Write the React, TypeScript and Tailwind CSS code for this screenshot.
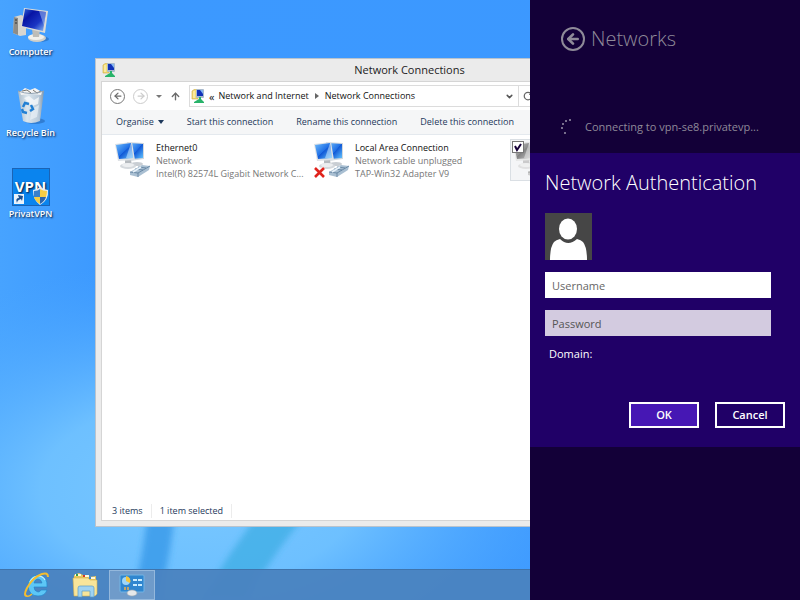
import { useState } from 'react';
import { ArrowLeft, ArrowRight, ArrowUp, ChevronDown, RotateCw } from 'lucide-react';

interface Connection {
  name: string;
  status: string;
  device: string;
  unplugged: boolean;
}

const connections: Connection[] = [
  { name: 'Ethernet0', status: 'Network', device: 'Intel(R) 82574L Gigabit Network C...', unplugged: false },
  { name: 'Local Area Connection', status: 'Network cable unplugged', device: 'TAP-Win32 Adapter V9', unplugged: true },
];

function ComputerIcon() {
  return (
    <svg width="38" height="36" viewBox="0 0 38 36" aria-hidden="true">
      <defs>
        <linearGradient id="pc-screen" x1="0" y1="0" x2="1" y2="1">
          <stop offset="0" stopColor="#2f6ae0" />
          <stop offset="0.3" stopColor="#0714a4" />
          <stop offset="0.65" stopColor="#1a35c4" />
          <stop offset="1" stopColor="#8fc4f8" />
        </linearGradient>
      </defs>
      <ellipse cx="28" cy="32" rx="9" ry="3" fill="#1d5ca8" opacity="0.5" />
      <path d="M2 10 L9 8 L14 10 V28 L8 29 L1 26 Z" fill="#d8d6d0" />
      <path d="M2 10 L6 11 V28 L1 26 Z" fill="#8d8c88" />
      <path d="M3 13 h2 M3 16 h2" stroke="#333" />
      <ellipse cx="25" cy="31" rx="9" ry="4" fill="#cfcfca" />
      <ellipse cx="24" cy="30" rx="8" ry="3" fill="#f1f1ec" />
      <path d="M20 22 L28 23 L27 30 H21 Z" fill="#bdbdb8" />
      <path d="M12 1 L36 4 L33 26 L9 20 Z" fill="#dcdcd8" />
      <path d="M13 2 L34 5 L31 24 L10 19 Z" fill="url(#pc-screen)" />
      <path d="M27 4 L34 5 L32 19 Z" fill="#a8c8f5" opacity="0.5" />
    </svg>
  );
}

function RecycleBinIcon() {
  return (
    <svg width="32" height="38" viewBox="0 0 32 38" aria-hidden="true">
      <defs>
        <linearGradient id="bin-glass" x1="0" y1="0" x2="1" y2="0">
          <stop offset="0" stopColor="#a9bac8" />
          <stop offset="0.35" stopColor="#dbe6ee" />
          <stop offset="0.8" stopColor="#b9cad9" />
          <stop offset="1" stopColor="#7f97ad" />
        </linearGradient>
      </defs>
      <ellipse cx="20" cy="34" rx="10" ry="3" fill="#1d5ca8" opacity="0.5" />
      <path d="M3 4 L29 4 L25 34 Q16 38 8 34 Z" fill="url(#bin-glass)" />
      <path d="M5 5 L10 1 L15 3 L20 1 L27 5 L26 8 L17 7 L6 8 Z" fill="#f3f3f3" />
      <path d="M7 4 L12 3 L16 6 M18 3 L22 6 L26 4" stroke="#77756f" fill="none" />
      <path d="M9 11 L14 9 L19 13 L24 10 L23 17 L17 19 Z" fill="#f6f9fb" opacity="0.8" />
      <path d="M17 22 L24 18 L22 30 L15 33 Z" fill="#eaf1f6" opacity="0.7" />
      <path d="M3 4 Q16 9 29 4" fill="none" stroke="#90a3b4" />
      <path d="M8 20 L10 16 L14 17 M16 18 L18 22 L15 24 M12 26 L8 25 L7 22" fill="none" stroke="#2380d3" strokeWidth="2.5" />
    </svg>
  );
}

function VpnIcon() {
  return (
    <div className="relative flex h-[38px] w-[38px] items-center justify-center border border-[#1b63b5] bg-[#0a84ee]">
      <span className="text-[15px] font-bold leading-none text-white">VPN</span>
      <svg className="absolute inset-0" width="36" height="36" viewBox="0 0 36 36" aria-hidden="true">
        <rect x="1" y="25" width="10" height="10" fill="#e9f2fb" />
        <path d="M4 34 Q2 29 6 29 L5 26 L10 27 L9 32 L8 30 Q4 31 4 34 Z" fill="#1b4f8f" />
        <path d="M27 18 Q31 21 35 21 Q36 31 27 36 Q20 31 20 21 Q24 21 27 18 Z" fill="#e8edf2" />
        <path d="M27 20 V28 H21 Q21 25 21 22 Q25 22 27 20 Z" fill="#3a80cc" />
        <path d="M27 20 Q30 22 34 22 Q34 25 33 28 H27 Z" fill="#f5cd45" />
        <path d="M21 28 H27 V35 Q22 32 21 28 Z" fill="#f5cd45" />
        <path d="M27 28 H33 Q32 32 27 35 Z" fill="#2a64ad" />
      </svg>
    </div>
  );
}

function NetworkFolderIcon() {
  return (
    <svg width="14" height="14" viewBox="0 0 14 14" aria-hidden="true" className="shrink-0">
      <path d="M1 2 L4 0 L7 1 V10 H1 Z" fill="#f3dc76" stroke="#c9a93c" strokeWidth="0.6" />
      <path d="M3 2 V9" stroke="#fff7c8" />
      <rect x="5" y="0" width="8" height="9" rx="1" fill="#a9bacd" />
      <rect x="6" y="1" width="6" height="6" fill="#1232b8" />
      <path d="M9 1 h3 v4 Z" fill="#88b9f2" />
      <path d="M8 8 h2 v2 l3 3 v1 H3 v-1 l5 -3 Z" fill="#28b36a" />
    </svg>
  );
}

function AdapterIcon({ unplugged, dimmed = false }: { unplugged: boolean; dimmed?: boolean }) {
  return (
    <svg
      width="38"
      height="38"
      viewBox="0 0 38 38"
      aria-hidden="true"
      className={dimmed ? 'shrink-0 opacity-70 grayscale' : 'shrink-0'}
    >
      <defs>
        <linearGradient id="adapter-screen" x1="0" y1="0" x2="1" y2="1">
          <stop offset="0" stopColor="#6fbcfb" />
          <stop offset="0.5" stopColor="#1f6fe6" />
          <stop offset="0.52" stopColor="#1158d6" />
          <stop offset="1" stopColor="#65c6ff" />
        </linearGradient>
      </defs>
      <ellipse cx="23" cy="23" rx="6" ry="2" fill="#c9ced3" />
      <path d="M13 1 L30 2 V18 L16 20 Z" fill="#d3d8dd" />
      <path d="M15 2 L29 3 V17 L17 18 Z" fill="url(#adapter-screen)" />
      <path d="M11 19 L17 19 L18 24 H11 Z" fill="#b5babf" />
      <ellipse cx="14" cy="25" rx="8" ry="3" fill="#d5d9dd" />
      <ellipse cx="14" cy="24" rx="6" ry="2" fill="#eceef0" />
      <path d="M1 3 L18 1 L21 19 L4 20 Z" fill="#dde1e5" />
      <path d="M2 4 L17 2 L19 17 L5 18 Z" fill="url(#adapter-screen)" />
      <path d="M17 2 L19 17 L12 17 Z" fill="#d9efff" opacity="0.5" />
      <path d="M16 31 L28 24 L36 25 L35 29 L24 36 L16 34 Z" fill="#a9bfd2" />
      <path d="M16 31 L24 32 L36 25 M24 32 V36 M21 28 L29 29 M24 26 L32 27" stroke="#5b7c9b" fill="none" strokeWidth="0.8" />
      <path d="M19 31 L27 26" stroke="#e8f2fa" strokeWidth="1.5" />
      {unplugged && (
        <g>
          <path d="M2 27 L11 36 M11 27 L2 36" stroke="#fff" strokeWidth="4" />
          <path d="M2 27 L11 36 M11 27 L2 36" stroke="#e0231c" strokeWidth="2.6" />
        </g>
      )}
    </svg>
  );
}

function ExplorerBrowserIcon() {
  return (
    <svg width="28" height="28" viewBox="0 0 28 28" aria-hidden="true">
      <path
        d="M11 16 H24 Q25 5 15 4 Q5 5 5 15 Q6 25 15 25 Q22 25 24 19 H18 Q17 21 15 21 Q11 20 11 16 Z M11 12 Q12 8 15 8 Q18 8 19 12 Z"
        fill="#5cc6f6"
        fillRule="evenodd"
        stroke="#2486cc"
        strokeWidth="0.7"
      />
      <path d="M7 11 Q9 6 15 5 Q20 5 22 9" fill="none" stroke="#c9f0ff" strokeWidth="1.2" />
      <path d="M4 25 Q0 25 4 17 Q10 6 19 3 Q25 1 25 6" fill="none" stroke="#f4bd2f" strokeWidth="2" />
      <path d="M4 25 Q6 26 9 23" fill="none" stroke="#f4bd2f" strokeWidth="1.4" />
    </svg>
  );
}

function FolderIcon() {
  return (
    <svg width="28" height="26" viewBox="0 0 28 26" aria-hidden="true">
      <path d="M3 3 L8 1 L12 3 L17 3 L18 5 L25 4 V12 H3 Z" fill="#e8c65c" />
      <path d="M4 3 h6 M13 4 h5 M19 6 h5" stroke="#fff8dc" strokeWidth="2" />
      <path d="M5 3 h2" stroke="#35a04a" strokeWidth="2" />
      <path d="M12 4 h2" stroke="#d53a2c" strokeWidth="2" />
      <path d="M18 6 h2" stroke="#3a87d3" strokeWidth="2" />
      <path d="M2 6 H17 L19 8 H26 V22 L24 24 H3 Z" fill="#f8e59a" stroke="#d9b44b" strokeWidth="0.6" />
      <path d="M7 25 V16 Q7 14 9 14 H21 Q23 14 23 16 V25 H19 V19 H11 V25 Z" fill="#9fd3f2" stroke="#5a9cc8" strokeWidth="0.7" />
    </svg>
  );
}

function ControlPanelIcon() {
  return (
    <svg width="28" height="24" viewBox="0 0 28 24" aria-hidden="true">
      <rect x="2" y="2" width="24" height="17" rx="1" fill="#2f86cf" stroke="#74b4e4" />
      <circle cx="8" cy="8" r="4" fill="#9ed6f8" />
      <path d="M8 8 V3 A5 5 0 0 1 12 10 Z" fill="#f7c63a" />
      <path d="M15 7 h4 M20 7 h4 M15 12 h4 M20 12 h4" stroke="#c9ecff" strokeWidth="2" />
      <path d="M7 17 v-3 M10 17 v-3" stroke="#f0b04a" strokeWidth="1.5" />
      <ellipse cx="14" cy="20" rx="5" ry="3" fill="#e6e8ea" stroke="#a3a9af" strokeWidth="0.6" />
    </svg>
  );
}

function BusyDots() {
  return (
    <svg width="16" height="16" viewBox="0 0 16 16" aria-hidden="true" fill="#9a93a8" className="shrink-0">
      <circle cx="9" cy="1" r="1" />
      <circle cx="5" cy="2" r="1" />
      <circle cx="2" cy="5" r="1" />
      <circle cx="1" cy="9" r="1" />
      <circle cx="4" cy="14" r="1" />
    </svg>
  );
}

const shortcuts = [
  { label: 'Computer', icon: <ComputerIcon /> },
  { label: 'Recycle Bin', icon: <RecycleBinIcon /> },
  { label: 'PrivatVPN', icon: <VpnIcon /> },
];

function Wallpaper() {
  return (
    <svg className="absolute inset-0 h-full w-full" viewBox="0 0 800 600" preserveAspectRatio="none" aria-hidden="true">
      <defs>
        <linearGradient id="sky" x1="0" y1="0" x2="1" y2="0">
          <stop offset="0" stopColor="#47a3ff" />
          <stop offset="0.13" stopColor="#3c99ff" />
          <stop offset="1" stopColor="#3c98ff" />
        </linearGradient>
        <radialGradient id="glow">
          <stop offset="0" stopColor="#79c8ff" />
          <stop offset="0.4" stopColor="#70c2ff" stopOpacity="0.95" />
          <stop offset="1" stopColor="#4aa6ff" stopOpacity="0" />
        </radialGradient>
        <filter id="soft" x="-20%" y="-20%" width="140%" height="140%">
          <feGaussianBlur stdDeviation="3" />
        </filter>
      </defs>
      <rect width="800" height="600" fill="url(#sky)" />
      <ellipse cx="200" cy="490" rx="400" ry="230" fill="url(#glow)" />
      <g filter="url(#soft)">
        <path d="M151 480 L178 480 Q174 540 160 600 L132 600 Q145 550 151 480 Z" fill="#2f93e6" opacity="0.7" />
        <path d="M286 480 L335 480 Q285 535 246 600 L202 600 Q235 540 286 480 Z" fill="#35aae0" opacity="0.65" />
      </g>
    </svg>
  );
}

function NetworkWindow() {
  const [selected, setSelected] = useState(true);

  return (
    <section
      aria-label="Network Connections"
      className="mr-[82px] mt-[58px] mb-[42px] flex min-w-0 flex-1 flex-col border border-[#b9c3cd] bg-[#ebebeb] px-[5px] pb-[5px] text-[9px] text-[#1e395b]"
    >
      <header className="flex h-[22px] shrink-0 items-center px-px">
        <NetworkFolderIcon />
        <h1 className="flex-1 pr-2 text-center text-[11px] text-[#222]">Network Connections</h1>
      </header>

      <div className="flex flex-1 flex-col border border-[#d5d5d5] bg-white">
        {/* Navigation */}
        <nav className="flex h-7 shrink-0 items-center gap-2 px-2 text-[#6b6b6b]">
          <button aria-label="Back" className="flex size-[15px] items-center justify-center rounded-full border border-[#777]">
            <ArrowLeft size={10} strokeWidth={3} />
          </button>
          <button aria-label="Forward" className="flex size-[15px] items-center justify-center rounded-full border border-[#ccc] text-[#ccc]">
            <ArrowRight size={10} strokeWidth={3} />
          </button>
          <button aria-label="Recent locations">
            <svg width="6" height="3" viewBox="0 0 6 3"><path d="M0 0 H6 L3 3 Z" fill="#777" /></svg>
          </button>
          <button aria-label="Up">
            <ArrowUp size={11} strokeWidth={3} />
          </button>
          <div className="flex h-[22px] flex-1 items-center border border-[#dcdcdc] pl-px text-[#111]">
            <NetworkFolderIcon />
            <span className="px-1 text-[11px] leading-none">«</span>
            <a href="#network" className="whitespace-nowrap">Network and Internet</a>
            <svg width="4" height="6" viewBox="0 0 4 6" className="mx-[6px]"><path d="M0 0 V6 L4 3 Z" fill="#666" /></svg>
            <a href="#connections" className="flex-1 whitespace-nowrap">Network Connections</a>
            <button aria-label="Previous locations" className="px-1 text-[#555]">
              <ChevronDown size={9} strokeWidth={4} />
            </button>
            <button aria-label="Refresh" className="flex h-full items-center border-l border-[#dcdcdc] px-1 text-[#666]">
              <RotateCw size={10} strokeWidth={3} />
            </button>
          </div>
          <input aria-label="Search" className="h-[22px] w-[157px] border border-[#dcdcdc]" />
        </nav>

        {/* Commands */}
        <div className="flex h-[25px] shrink-0 items-center gap-[23px] border-b border-[#e4e9ee] bg-[#f5f6f7] px-[14px]">
          <button className="flex items-center gap-1">
            Organise
            <svg width="6" height="4" viewBox="0 0 6 4"><path d="M0 0 H6 L3 4 Z" fill="#1e395b" /></svg>
          </button>
          <button className="whitespace-nowrap">Start this connection</button>
          <button className="whitespace-nowrap">Rename this connection</button>
          <button className="whitespace-nowrap">Delete this connection</button>
          <button aria-label="More commands">»</button>
        </div>

        {/* Connections */}
        <ul className="flex flex-1 items-start overflow-hidden pl-[10px] pt-1">
          {connections.map((connection) => (
            <li key={connection.name} className="flex w-[199px] shrink-0 gap-1 p-[2px]">
              <AdapterIcon unplugged={connection.unplugged} />
              <div className="whitespace-nowrap leading-[13px] text-[#777]">
                <p className="text-[#111]">{connection.name}</p>
                <p>{connection.status}</p>
                <p>{connection.device}</p>
              </div>
            </li>
          ))}
          <li className="relative flex w-[190px] shrink-0 border border-[#dadfe4] bg-[#f4f5f7] p-px">
            <AdapterIcon unplugged={false} dimmed />
            <label className="absolute left-px top-px flex size-3">
              <input
                type="checkbox"
                aria-label="Select connection"
                checked={selected}
                onChange={(e) => setSelected(e.target.checked)}
                className="size-3 appearance-none border border-[#777] bg-white"
              />
              {selected && (
                <svg className="absolute inset-0" width="12" height="12" viewBox="0 0 12 12">
                  <path d="M3 5 L5 9 L9 3" fill="none" stroke="#160038" strokeWidth="2" />
                </svg>
              )}
            </label>
          </li>
        </ul>

        <footer className="flex h-[18px] shrink-0 items-center pl-[10px]">
          <span className="border-r border-[#ececec] pr-2">3 items</span>
          <span className="border-r border-[#ececec] px-2">1 item selected</span>
        </footer>
      </div>
    </section>
  );
}

function NetworkPanel() {
  return (
    <aside className="absolute inset-y-0 right-0 flex w-[270px] flex-col bg-[#130038] text-[11px] text-[#8f8a99]">
      <div className="flex h-[153px] shrink-0 flex-col justify-between pb-4 pl-[31px] pt-6">
        <div className="flex items-center gap-[6px]">
          <button aria-label="Back" className="flex size-6 items-center justify-center rounded-full border-2 border-[#8f8a99]">
            <ArrowLeft size={16} strokeWidth={4} />
          </button>
          <h2 className="text-[20px] font-light leading-[30px]">Networks</h2>
        </div>
        <div className="flex items-center gap-2">
          <BusyDots />
          <p className="whitespace-nowrap leading-5">Connecting to vpn-se8.privatevp...</p>
        </div>
      </div>

      <form className="flex h-[294px] shrink-0 flex-col bg-[#200067] px-[15px] text-white" onSubmit={(e) => e.preventDefault()}>
        <h2 className="mt-4 whitespace-nowrap text-[20px] font-light leading-7">Network Authentication</h2>
        <svg className="mt-4 shrink-0" width="47" height="47" viewBox="0 0 47 47" aria-hidden="true">
          <rect width="47" height="47" fill="#464646" />
          <ellipse cx="23" cy="16" rx="9" ry="10.5" fill="#fff" />
          <path d="M5 47 Q5 34 9 29 Q11 27 15 26 Q23 34 32 26 Q36 27 38 29 Q42 34 42 47 Z" fill="#fff" />
        </svg>
        <input
          type="text"
          aria-label="Username"
          placeholder="Username"
          className="mt-3 h-[26px] w-[226px] shrink-0 bg-white px-[7px] text-black placeholder:text-[#666]"
        />
        <input
          type="password"
          aria-label="Password"
          placeholder="Password"
          className="mt-3 h-[26px] w-[226px] shrink-0 bg-[#d3cbe0] px-[7px] text-black placeholder:text-[#555]"
        />
        <p className="ml-1 mt-2 leading-5">Domain:</p>
        <div className="mt-[38px] flex justify-end gap-4 font-semibold">
          <button type="submit" className="h-[26px] w-[70px] border-2 border-white bg-[#4617b4]">OK</button>
          <button type="button" className="h-[26px] w-[70px] border-2 border-white">Cancel</button>
        </div>
      </form>
    </aside>
  );
}

export default function App() {
  return (
    <div className="relative flex min-h-screen flex-col overflow-hidden font-['Open_Sans','Noto_Sans',sans-serif]">
      <Wallpaper />

      <main className="relative flex flex-1">
        <div className="flex w-[95px] shrink-0 flex-col pt-1">
          {shortcuts.map((shortcut) => (
            <a
              key={shortcut.label}
              href="#open"
              className="flex h-[81px] w-[61px] flex-col items-center text-[9px] font-semibold text-white text-shadow-[1px_1px_2px_#001030]"
            >
              <span className="flex h-[41px] items-center">{shortcut.icon}</span>
              <span className="whitespace-nowrap leading-[14px]">{shortcut.label}</span>
            </a>
          ))}
        </div>
        <NetworkWindow />
      </main>

      <footer className="relative flex h-[31px] shrink-0 border-t border-[#3f74ac] bg-[#4a83c0]/95 pl-[13px]">
        <button aria-label="Internet Explorer" className="flex w-12 items-center justify-center">
          <ExplorerBrowserIcon />
        </button>
        <button aria-label="File Explorer" className="flex w-12 items-center justify-center">
          <FolderIcon />
        </button>
        <button aria-label="Control Panel" className="flex w-[46px] items-center justify-center border border-[#94b8dc] bg-[#6f9bca]">
          <ControlPanelIcon />
        </button>
      </footer>

      <NetworkPanel />
    </div>
  );
}
